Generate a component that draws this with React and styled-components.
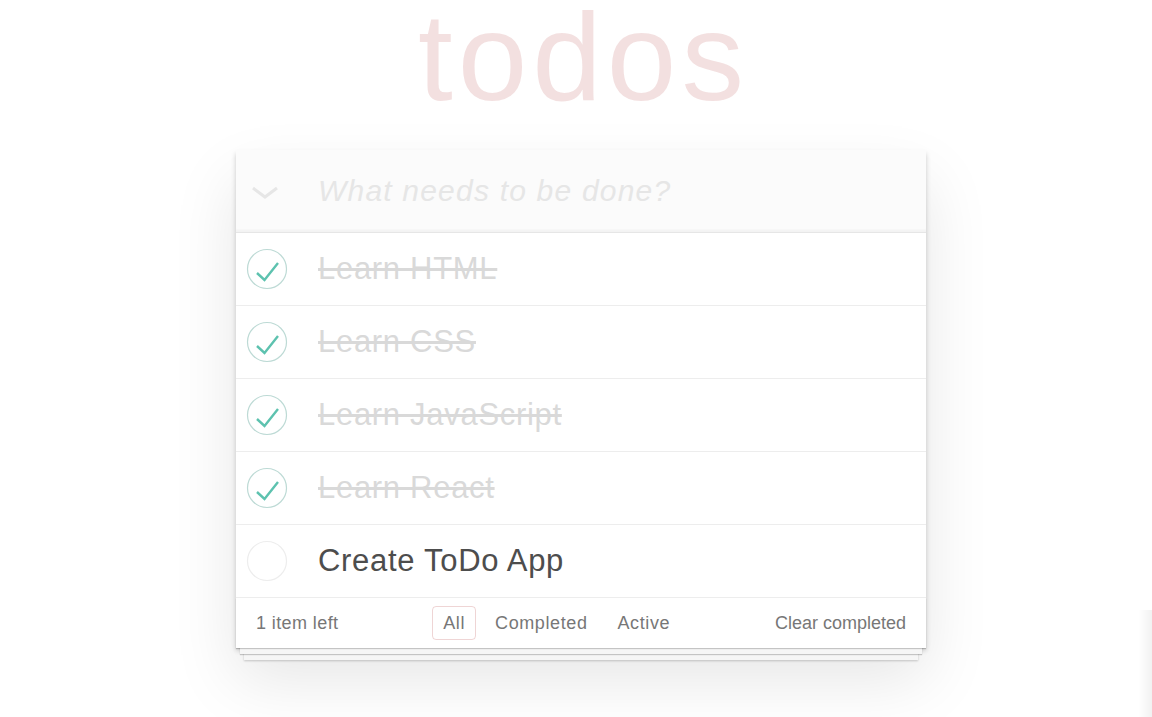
import React from 'react';
import styled, { createGlobalStyle } from 'styled-components';

const todos = [
  { id: 1, title: 'Learn HTML', completed: true },
  { id: 2, title: 'Learn CSS', completed: true },
  { id: 3, title: 'Learn JavaScript', completed: true },
  { id: 4, title: 'Learn React', completed: true },
  { id: 5, title: 'Create ToDo App', completed: false },
];

const filters = ['All', 'Completed', 'Active'];

const GlobalStyle = createGlobalStyle`
  html, body {
    margin: 0;
    padding: 0;
    background: #fff;
  }

  body {
    font-family: "Liberation Sans", Arial, Helvetica, sans-serif;
    color: #4d4d4d;
    -webkit-font-smoothing: antialiased;
  }
`;

const Page = styled.div`
  min-height: 717px;
  padding-left: 10px;
  box-sizing: border-box;
`;

const Wrapper = styled.section`
  width: 690px;
  margin: 0 auto;
`;

const Title = styled.h1`
  margin: 0;
  padding: 8px 0 0 5px;
  height: 104px;
  font-size: 125px;
  line-height: 98px;
  font-weight: 100;
  letter-spacing: 5px;
  text-align: center;
  color: rgba(175, 47, 47, 0.15);
`;

const Card = styled.div`
  margin-top: 38px;
  background: #fff;
  box-shadow: 0 2.5px 5px 0 rgba(0, 0, 0, 0.2), 0 31px 62px 0 rgba(0, 0, 0, 0.1);
`;

const Header = styled.header`
  display: flex;
  align-items: center;
  height: 82px;
  background: rgba(0, 0, 0, 0.015);
  box-shadow: inset 0 -2.5px 1px rgba(0, 0, 0, 0.03);
  border-bottom: 1px solid #e6e6e6;
`;

const ToggleAll = styled.label`
  display: flex;
  align-items: center;
  width: 82px;
  padding-left: 15px;
  padding-top: 4px;
  box-sizing: border-box;
`;

const NewTodo = styled.input`
  flex: 1;
  min-width: 0;
  border: none;
  outline: none;
  background: transparent;
  padding: 0;
  font-family: inherit;
  font-size: 30px;
  line-height: 42px;
  letter-spacing: 1.2px;
  color: #4d4d4d;

  &::placeholder {
    font-style: italic;
    font-weight: 300;
    color: #e6e6e6;
  }
`;

const List = styled.ul`
  margin: 0;
  padding: 0;
  list-style: none;
`;

const Row = styled.li`
  display: flex;
  align-items: center;
  height: 72px;
  border-bottom: 1px solid #ededed;
`;

const Toggle = styled.svg`
  flex: none;
  margin-left: 9px;
`;

const Label = styled.label`
  margin-left: 29px;
  font-size: 31px;
  line-height: 36px;
  letter-spacing: 0.7px;
  color: ${({ $done }) => ($done ? '#d9d9d9' : '#4d4d4d')};
  text-decoration: ${({ $done }) => ($done ? 'line-through' : 'none')};
`;

const Footer = styled.footer`
  position: relative;
  display: flex;
  align-items: center;
  justify-content: space-between;
  height: 50px;
  padding: 0 20px;
  font-size: 18px;
  letter-spacing: 0.4px;
  color: #777;

  &::before {
    content: '';
    position: absolute;
    left: 0;
    right: 0;
    bottom: 0;
    height: 50px;
    box-shadow: 0 1px 1px rgba(0, 0, 0, 0.2),
      0 10px 0 -4px #f6f6f6,
      0 11px 1px -4px rgba(0, 0, 0, 0.2),
      0 20px 0 -8px #f6f6f6,
      0 21px 2px -8px rgba(0, 0, 0, 0.2);
  }
`;

const Count = styled.span`
  position: relative;
`;

const Filters = styled.ul`
  position: relative;
  display: flex;
  margin: 0;
  padding: 0;
  list-style: none;
  letter-spacing: 0.6px;
`;

const FilterLink = styled.a`
  display: block;
  margin: 0 4px;
  padding: 6px 10px;
  line-height: 20px;
  border: 1px solid ${({ $active }) => ($active ? 'rgba(175, 47, 47, 0.2)' : 'transparent')};
  border-radius: 4px;
  color: inherit;
  text-decoration: none;
  cursor: pointer;
`;

const ClearButton = styled.button`
  position: relative;
  border: none;
  background: none;
  padding: 0;
  font: inherit;
  letter-spacing: 0;
  color: inherit;
  cursor: pointer;
`;

const EdgeShade = styled.div`
  position: fixed;
  top: 610px;
  right: 0;
  bottom: 0;
  width: 14px;
  background: linear-gradient(to right, rgba(0, 0, 0, 0), rgba(0, 0, 0, 0.05));
  pointer-events: none;
`;

const Chevron = () => (
  <svg width="28" height="16" viewBox="0 0 28 16">
    <polyline points="2,3 14,12 26,3" fill="none" stroke="#e6e6e6" strokeWidth="3" />
  </svg>
);

const CheckCircle = ({ done }) => (
  <Toggle width="44" height="44" viewBox="0 0 44 44">
    <circle cx="22" cy="22" r="19.5" fill="none" stroke={done ? '#bddad5' : '#ededed'} strokeWidth="1.2" />
    {done && (
      <polyline
        points="12,26 19.5,33 33,16"
        fill="none"
        stroke="#5dc2af"
        strokeWidth="2.4"
      />
    )}
  </Toggle>
);

const App = () => {
  const left = todos.filter((t) => !t.completed).length;

  return (
    <Page>
      <GlobalStyle />
      <Wrapper>
        <Title>todos</Title>
        <Card>
          <Header>
            <ToggleAll>
              <Chevron />
            </ToggleAll>
            <NewTodo placeholder="What needs to be done?" readOnly />
          </Header>
          <List>
            {todos.map((todo) => (
              <Row key={todo.id}>
                <CheckCircle done={todo.completed} />
                <Label $done={todo.completed}>{todo.title}</Label>
              </Row>
            ))}
          </List>
          <Footer>
            <Count>{`${left} item left`}</Count>
            <Filters>
              {filters.map((f) => (
                <li key={f}>
                  <FilterLink $active={f === 'All'}>{f}</FilterLink>
                </li>
              ))}
            </Filters>
            <ClearButton>Clear completed</ClearButton>
          </Footer>
        </Card>
      </Wrapper>
      <EdgeShade />
    </Page>
  );
};

export default App;
